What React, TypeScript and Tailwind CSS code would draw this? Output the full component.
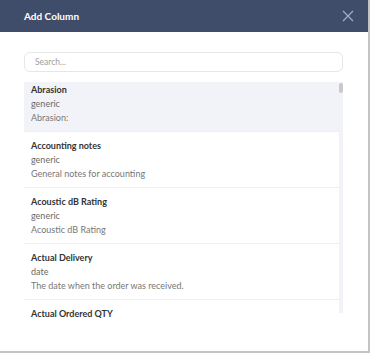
import React from "react";

const items = [
  { name: "Abrasion", type: "generic", desc: "Abrasion:" },
  { name: "Accounting notes", type: "generic", desc: "General notes for accounting" },
  { name: "Acoustic dB Rating", type: "generic", desc: "Acoustic dB Rating" },
  { name: "Actual Delivery", type: "date", desc: "The date when the order was received." },
];

export default function App() {
  return (
    <div className="w-[370px] h-[353px] bg-[#c4c4c4] overflow-hidden" style={{ fontFamily: "Lato, 'Open Sans', sans-serif" }}>
      <div className="w-[368px] h-[351px] bg-white flex flex-col">
        <div className="h-[32px] bg-[#3f4d6b] flex items-center justify-between pl-6 pr-[14px] shrink-0">
          <span className="text-white font-bold text-[10px]">Add Column</span>
          <svg width="12" height="12" viewBox="0 0 12 12" fill="none" stroke="#a3adc2" strokeWidth="1.3">
            <path d="M1 1 L11 11 M11 1 L1 11" />
          </svg>
        </div>
        <div className="pl-6 pr-[25px] pt-5">
          <div className="h-[20px] rounded-md border border-[#e6e6e6] flex items-center pl-[10px]">
            <span className="text-[8.5px] text-[#a0a0a0]">Search...</span>
          </div>
          <div className="mt-[10px] h-[236px] flex overflow-hidden">
            <div className="flex-1 overflow-hidden">
              <div className="-mt-[6px]">
                {items.map((it, i) => (
                  <div
                    key={it.name}
                    className={`pl-[7px] pt-[7px] pb-[6px] border-b border-[#efefef] ${i === 0 ? "bg-[#f2f3f8]" : "bg-white"}`}
                  >
                    <div className="text-[9px] leading-[14px] font-bold text-[#333]">{it.name}</div>
                    <div className="text-[9px] leading-[14px] text-[#6a6a6a]">{it.type}</div>
                    <div className="text-[9px] leading-[14px] text-[#777]">{it.desc}</div>
                  </div>
                ))}
                <div className="pl-[7px] pt-[7px]">
                  <div className="text-[9px] leading-[14px] font-bold text-[#333]">Actual Ordered QTY</div>
                </div>
              </div>
            </div>
            <div className="w-[4px] mb-[5px] flex flex-col bg-[#f2f3f8]">
              <div className="mt-[1px] h-[10px] rounded-sm bg-[#c9c9cc]" />
            </div>
          </div>
        </div>
      </div>
    </div>
  );
}
